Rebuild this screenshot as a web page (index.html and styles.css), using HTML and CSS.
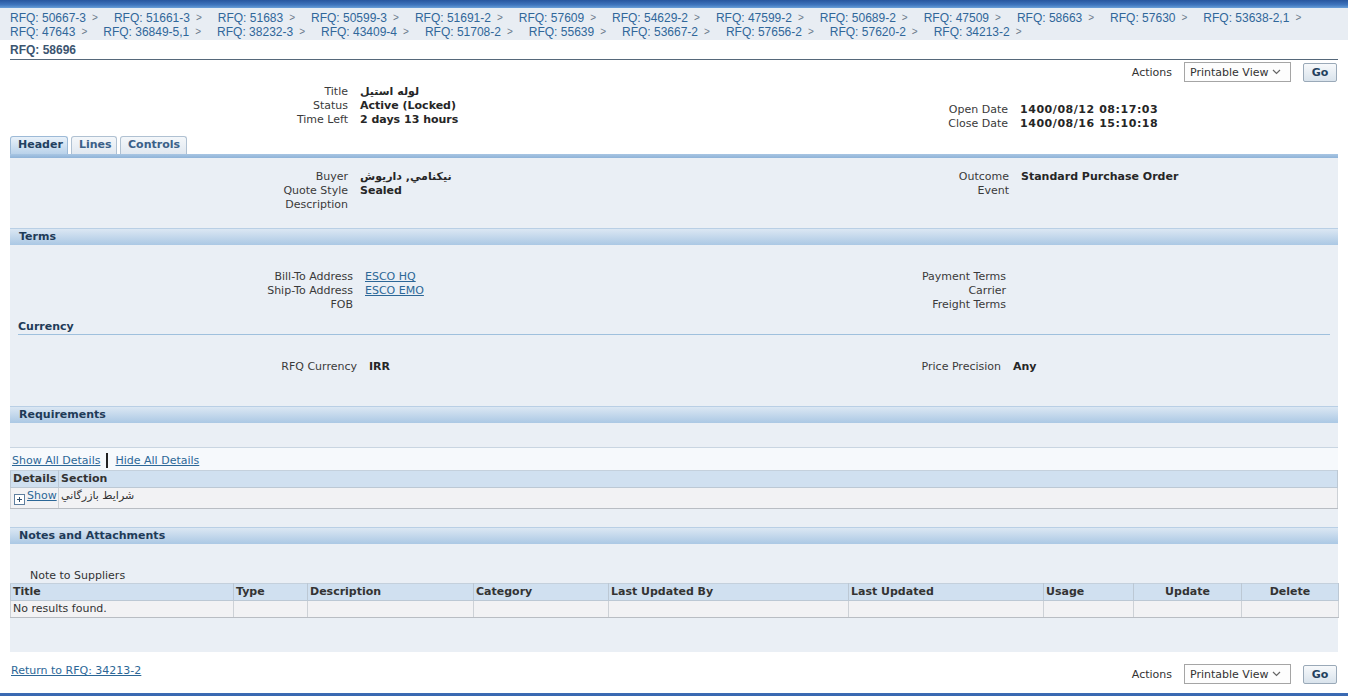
FILE: index.html
```html
<!DOCTYPE html>
<html>
<head>
<meta charset="utf-8">
<title>RFQ: 58696</title>
<link rel="stylesheet" href="styles.css">
</head>
<body>
<div class="topstripe"></div>
<div class="crumbs">
  <div class="crow">
    <a class="crumb">RFQ: 50667-3</a><span class="sep">&gt;</span>
    <a class="crumb">RFQ: 51661-3</a><span class="sep">&gt;</span>
    <a class="crumb">RFQ: 51683</a><span class="sep">&gt;</span>
    <a class="crumb">RFQ: 50599-3</a><span class="sep">&gt;</span>
    <a class="crumb">RFQ: 51691-2</a><span class="sep">&gt;</span>
    <a class="crumb">RFQ: 57609</a><span class="sep">&gt;</span>
    <a class="crumb">RFQ: 54629-2</a><span class="sep">&gt;</span>
    <a class="crumb">RFQ: 47599-2</a><span class="sep">&gt;</span>
    <a class="crumb">RFQ: 50689-2</a><span class="sep">&gt;</span>
    <a class="crumb">RFQ: 47509</a><span class="sep">&gt;</span>
    <a class="crumb">RFQ: 58663</a><span class="sep">&gt;</span>
    <a class="crumb">RFQ: 57630</a><span class="sep">&gt;</span>
    <a class="crumb">RFQ: 53638-2,1</a><span class="sep">&gt;</span>
  </div>
  <div class="crow">
    <a class="crumb">RFQ: 47643</a><span class="sep">&gt;</span>
    <a class="crumb">RFQ: 36849-5,1</a><span class="sep">&gt;</span>
    <a class="crumb">RFQ: 38232-3</a><span class="sep">&gt;</span>
    <a class="crumb">RFQ: 43409-4</a><span class="sep">&gt;</span>
    <a class="crumb">RFQ: 51708-2</a><span class="sep">&gt;</span>
    <a class="crumb">RFQ: 55639</a><span class="sep">&gt;</span>
    <a class="crumb">RFQ: 53667-2</a><span class="sep">&gt;</span>
    <a class="crumb">RFQ: 57656-2</a><span class="sep">&gt;</span>
    <a class="crumb">RFQ: 57620-2</a><span class="sep">&gt;</span>
    <a class="crumb">RFQ: 34213-2</a><span class="sep">&gt;</span>
  </div>
</div>

<div class="page">
  <div class="pagetitle">RFQ: 58696</div>

  <div class="actions top">
    <span class="act-label">Actions</span>
    <div class="selectbox"><span>Printable View</span>
      <svg width="9" height="6" viewBox="0 0 9 6"><path d="M1 1 L4.5 4.5 L8 1" fill="none" stroke="#666" stroke-width="1.2"/></svg>
    </div>
    <button class="gobtn">Go</button>
  </div>

  <div class="summary">
    <div class="fgrid sum-l">
      <span class="lbl">Title</span><span class="val">لوله استيل</span>
      <span class="lbl">Status</span><span class="val">Active (Locked)</span>
      <span class="lbl">Time Left</span><span class="val">2 days 13 hours</span>
    </div>
    <div class="fgrid sum-r">
      <span class="lbl">Open Date</span><span class="val num">1400/08/12 08:17:03</span>
      <span class="lbl">Close Date</span><span class="val num">1400/08/16 15:10:18</span>
    </div>
  </div>

  <div class="tabs">
    <div class="tab active">Header</div>
    <div class="tab">Lines</div>
    <div class="tab">Controls</div>
  </div>
  <div class="tabbar"></div>

  <div class="panel">
    <div class="fields hdr">
      <div class="fgrid hdr-l">
        <span class="lbl">Buyer</span><span class="val">نيكنامي, داريوش</span>
        <span class="lbl">Quote Style</span><span class="val">Sealed</span>
        <span class="lbl">Description</span><span class="val"></span>
      </div>
      <div class="fgrid hdr-r">
        <span class="lbl">Outcome</span><span class="val">Standard Purchase Order</span>
        <span class="lbl">Event</span><span class="val"></span>
      </div>
    </div>

    <div class="secbar terms-bar">Terms</div>
    <div class="fields terms">
      <div class="fgrid terms-l">
        <span class="lbl">Bill-To Address</span><a class="lnk">ESCO HQ</a>
        <span class="lbl">Ship-To Address</span><a class="lnk">ESCO EMO</a>
        <span class="lbl">FOB</span><span class="val"></span>
      </div>
      <div class="fgrid terms-r">
        <span class="lbl">Payment Terms</span><span class="val"></span>
        <span class="lbl">Carrier</span><span class="val"></span>
        <span class="lbl">Freight Terms</span><span class="val"></span>
      </div>
    </div>
    <div class="subhead">Currency</div>
    <div class="fields curr">
      <div class="fgrid curr-l">
        <span class="lbl">RFQ Currency</span><span class="val">IRR</span>
      </div>
      <div class="fgrid curr-r">
        <span class="lbl">Price Precision</span><span class="val">Any</span>
      </div>
    </div>

    <div class="secbar req-bar">Requirements</div>
    <div class="detailbar">
      <a class="lnk">Show All Details</a><span class="vbar"></span><a class="lnk">Hide All Details</a>
    </div>
    <table class="grid req">
      <colgroup><col class="c-det"><col></colgroup>
      <thead><tr><th>Details</th><th>Section</th></tr></thead>
      <tbody><tr>
        <td class="detcell"><svg class="plus" width="11" height="11" viewBox="0 0 11 11"><rect x="0.5" y="0.5" width="10" height="10" fill="#fff" stroke="#5f7f9f"/><path d="M3 5.5 H8 M5.5 3 V8" stroke="#2f4f6f" stroke-width="1"/></svg><a class="lnk">Show</a></td>
        <td>شرايط بازرگاني</td>
      </tr></tbody>
    </table>

    <div class="secbar notes-bar">Notes and Attachments</div>
    <div class="notelabel">Note to Suppliers</div>
    <table class="grid notes">
      <colgroup>
        <col class="w-title"><col class="w-type"><col class="w-desc"><col class="w-cat"><col class="w-lub"><col class="w-lu"><col class="w-usage"><col class="w-upd"><col class="w-del">
      </colgroup>
      <thead><tr>
        <th>Title</th><th>Type</th><th>Description</th><th>Category</th><th>Last Updated By</th><th>Last Updated</th><th>Usage</th><th class="ctr">Update</th><th class="ctr">Delete</th>
      </tr></thead>
      <tbody><tr>
        <td>No results found.</td><td></td><td></td><td></td><td></td><td></td><td></td><td></td><td></td>
      </tr></tbody>
    </table>
  </div>

  <div class="footer">
    <a class="lnk">Return to RFQ: 34213-2</a>
    <div class="actions">
      <span class="act-label">Actions</span>
      <div class="selectbox"><span>Printable View</span>
        <svg width="9" height="6" viewBox="0 0 9 6"><path d="M1 1 L4.5 4.5 L8 1" fill="none" stroke="#666" stroke-width="1.2"/></svg>
      </div>
      <button class="gobtn">Go</button>
    </div>
  </div>
</div>
<div class="bottombar"></div>
</body>
</html>
```
FILE: styles.css
```css
* { box-sizing: border-box; }
html, body { margin: 0; padding: 0; }
body {
  font-family: "DejaVu Sans", "Liberation Sans", Arial, sans-serif;
  font-size: 11px;
  color: #3a3a3a;
  background: #fff;
  overflow: hidden;
}
a { cursor: pointer; }

.topstripe {
  height: 8px;
  background: linear-gradient(180deg, #28569e 0%, #3f75bd 60%, #6a9fd8 100%);
}

.crumbs {
  background: #e8edf3;
  height: 32px;
  padding: 3px 10px 0;
  font-family: "Liberation Sans", Arial, sans-serif;
}
.crow {
  display: flex;
  line-height: 14px;
  white-space: nowrap;
}
.crumb {
  color: #30679a;
  font-size: 12px;
  text-decoration: none;
}
.sep {
  color: #6a7a8a;
  font-size: 10px;
  margin: 0 16px 0 6px;
}

.page { padding: 0 10px; }

.pagetitle {
  height: 20px;
  padding-top: 3px;
  line-height: 14px;
  font-family: "Liberation Sans", Arial, sans-serif;
  font-size: 12px;
  font-weight: bold;
  color: #3c5570;
  border-bottom: 1px solid #56687a;
}

.actions {
  display: flex;
  align-items: center;
  justify-content: flex-end;
  height: 20px;
}
.actions.top { margin-top: 2px; padding-right: 1px; }
.act-label { color: #333; margin-right: 12px; }
.selectbox {
  width: 107px;
  height: 20px;
  border: 1px solid #a5a5a5;
  background: #fdfdfd;
  display: flex;
  align-items: center;
  justify-content: space-between;
  padding: 0 9px 0 5px;
  color: #333;
}
.gobtn {
  margin-left: 12px;
  width: 34px;
  height: 19px;
  padding: 0;
  font: bold 11px "DejaVu Sans", sans-serif;
  color: #24405e;
  border: 1px solid #9aa9b8;
  border-radius: 2px;
  background: linear-gradient(180deg, #f7f9fb, #d9e3ec);
}

.fgrid {
  display: grid;
  grid-template-columns: var(--lw) auto;
  column-gap: 12px;
  line-height: 14px;
  align-content: start;
}
.lbl { text-align: right; color: #3a3a3a; }
.val { font-weight: bold; color: #262626; min-height: 14px; }
.val.num { letter-spacing: 0.55px; }
.lnk { color: #2c6797; text-decoration: underline; }

.summary { display: flex; margin-top: 3px; }
.sum-l { --lw: 338px; width: 664px; }
.sum-r { --lw: 334px; padding-top: 18px; }

.tabs { display: flex; gap: 3px; margin-top: 5px; height: 18px; }
.tab {
  height: 18px;
  line-height: 16px;
  padding: 0 7px;
  font-weight: bold;
  color: #3b6088;
  border: 1px solid #b0c1d2;
  border-bottom: none;
  border-radius: 3px 3px 0 0;
  background: linear-gradient(180deg, #f4f7fa, #e1e8f0);
}
.tab.active {
  color: #22405f;
  background: linear-gradient(180deg, #e9f1f9, #b9d2ea);
  border-color: #9dbad7;
}
.tab:nth-child(1) { width: 58px; }
.tab:nth-child(2) { width: 46px; }
.tab:nth-child(3) { width: 67px; }
.tabbar {
  height: 4px;
  background: linear-gradient(180deg, #a9c6e3, #8fb3d8);
}

.panel {
  background: #eaeff5;
  padding-bottom: 34px;
}
.fields { display: flex; }
.fields > .fgrid:first-child { width: 664px; }
.hdr { padding-top: 12px; }
.hdr-l { --lw: 338px; }
.hdr-r { --lw: 335px; }

.secbar {
  height: 17px;
  line-height: 16px;
  padding-left: 9px;
  font-weight: bold;
  color: #1f3b58;
  border-top: 1px solid #b9cfe5;
  background: linear-gradient(180deg, #dbe7f3, #abc8e4);
}
.terms-bar { margin-top: 16px; }
.terms { margin-top: 25px; }
.terms-l { --lw: 343px; }
.terms-r { --lw: 332px; }

.subhead {
  margin: 8px 8px 0;
  line-height: 14px;
  font-weight: bold;
  color: #1f3b58;
  border-bottom: 1px solid #9fc0dd;
}
.curr { margin-top: 25px; }
.curr-l { --lw: 347px; }
.curr-r { --lw: 327px; }

.req-bar { margin-top: 32px; }
.detailbar {
  margin-top: 24px;
  height: 23px;
  display: flex;
  align-items: center;
  padding: 3px 2px 0;
  background: #f6f9fc;
  border-top: 1px solid #c9d5e1;
}
.vbar {
  width: 2px;
  height: 15px;
  background: #222;
  margin: 0 7px 0 6px;
}

table.grid {
  width: 100%;
  border-collapse: collapse;
  table-layout: fixed;
}
.grid th {
  background: #d0e0f0;
  text-align: left;
  font-weight: bold;
  color: #333;
  height: 17px;
  line-height: 14px;
  padding: 0 2px;
  border: 1px solid #bcc8d4;
  border-top-color: #c4d0dc;
}
.grid th.ctr { text-align: center; }
.grid td {
  background: #f2f2f4;
  line-height: 14px;
  padding: 0 2px;
  border: 1px solid #cdd1d6;
  border-bottom-color: #b9bdc3;
  color: #333;
}
.req td { height: 21px; vertical-align: top; padding-top: 1px; }
.c-det { width: 48px; }
.detcell { white-space: nowrap; padding-left: 3px !important; }
.plus { vertical-align: -6px; margin-right: 2px; }

.notes-bar { margin-top: 18px; }
.notelabel { margin-top: 25px; padding-left: 20px; line-height: 14px; color: #333; }
.notes { margin-top: 0; }
.notes td { height: 17px; }
.w-title { width: 223px; }
.w-type { width: 74px; }
.w-desc { width: 166px; }
.w-cat { width: 135px; }
.w-lub { width: 240px; }
.w-lu { width: 195px; }
.w-usage { width: 90px; }
.w-upd { width: 108px; }
.w-del { width: 97px; }

.footer {
  display: flex;
  justify-content: space-between;
  align-items: flex-start;
  padding-top: 12px;
  height: 41px;
}
.footer > .lnk { line-height: 14px; margin-left: 1px; }
.footer .actions { margin-top: 0; padding-right: 1px; }

.bottombar {
  height: 8px;
  background: linear-gradient(180deg, #3d6cb5, #2f5ea6);
}
```
